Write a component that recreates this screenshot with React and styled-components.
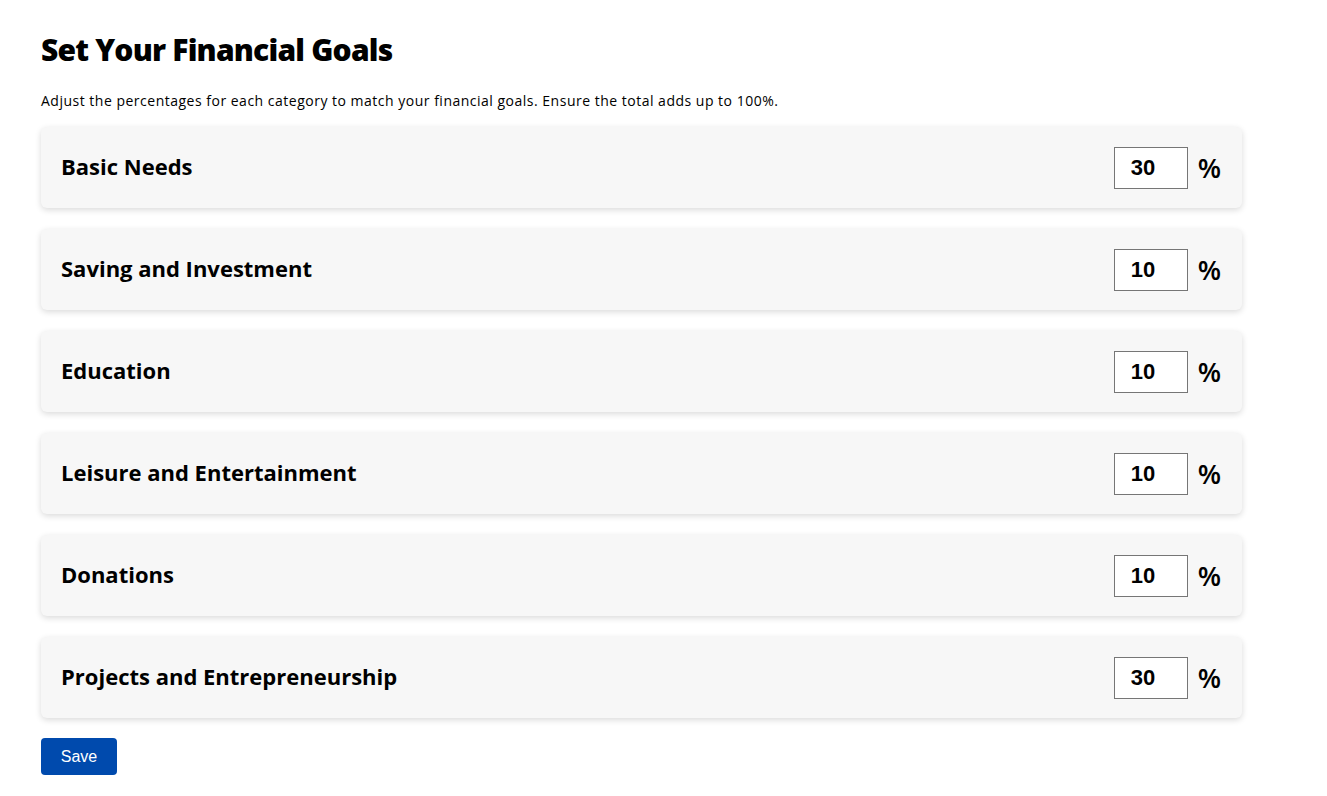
import { useState } from "react";
import styled, { createGlobalStyle } from "styled-components";

const GlobalStyle = createGlobalStyle`
  body {
    margin: 0;
    background: #ffffff;
    font-family: "Open Sans", "Noto Sans", sans-serif;
    color: #000000;
  }
`;

const Page = styled.div`
  padding: 30px 85px 20px 41px;
`;

const Title = styled.h1`
  margin: 0;
  font-size: 30px;
  font-weight: 800;
  line-height: 40px;
  letter-spacing: -0.8px;
`;

const Subtitle = styled.p`
  margin: 22px 0 17px;
  font-size: 14px;
  line-height: 18px;
  letter-spacing: 0.5px;
`;

const List = styled.div`
  display: flex;
  flex-direction: column;
  gap: 21px;
`;

const Card = styled.div`
  display: flex;
  align-items: center;
  justify-content: space-between;
  height: 81px;
  box-sizing: border-box;
  padding: 0 21px 0 20px;
  background: #f7f7f7;
  border-radius: 6px;
  box-shadow: 0 2px 6px rgba(0, 0, 0, 0.15);
`;

const Label = styled.span`
  margin-bottom: 3px;
  font-size: 22px;
  font-weight: 700;
`;

const Field = styled.div`
  display: flex;
  align-items: center;
  gap: 10px;
`;

const Input = styled.input`
  width: 74px;
  height: 42px;
  box-sizing: border-box;
  border: 1px solid #767676;
  background: #ffffff;
  padding: 0 0 0 16px;
  font-family: "Liberation Sans", Arial, sans-serif;
  font-size: 22px;
  font-weight: 700;
  color: #000000;
  outline: none;
`;

const Percent = styled.span`
  font-size: 27px;
  font-weight: 600;
`;

const SaveButton = styled.button`
  margin-top: 20px;
  width: 76px;
  height: 37px;
  border: none;
  border-radius: 4px;
  background: #004aad;
  color: #ffffff;
  font-family: "Liberation Sans", Arial, sans-serif;
  font-size: 16px;
  cursor: pointer;
`;

const initialGoals = [
  { id: 1, name: "Basic Needs", value: 30 },
  { id: 2, name: "Saving and Investment", value: 10 },
  { id: 3, name: "Education", value: 10 },
  { id: 4, name: "Leisure and Entertainment", value: 10 },
  { id: 5, name: "Donations", value: 10 },
  { id: 6, name: "Projects and Entrepreneurship", value: 30 },
];

export default function App() {
  const [goals, setGoals] = useState(initialGoals);

  const handleChange = (id, value) => {
    setGoals(goals.map((g) => (g.id === id ? { ...g, value } : g)));
  };

  return (
    <>
      <GlobalStyle />
      <Page>
        <Title>Set Your Financial Goals</Title>
        <Subtitle>
          Adjust the percentages for each category to match your financial
          goals. Ensure the total adds up to 100%.
        </Subtitle>
        <List>
          {goals.map((goal) => (
            <Card key={goal.id}>
              <Label>{goal.name}</Label>
              <Field>
                <Input
                  type="text"
                  value={goal.value}
                  onChange={(e) => handleChange(goal.id, e.target.value)}
                />
                <Percent>%</Percent>
              </Field>
            </Card>
          ))}
        </List>
        <SaveButton>Save</SaveButton>
      </Page>
    </>
  );
}
